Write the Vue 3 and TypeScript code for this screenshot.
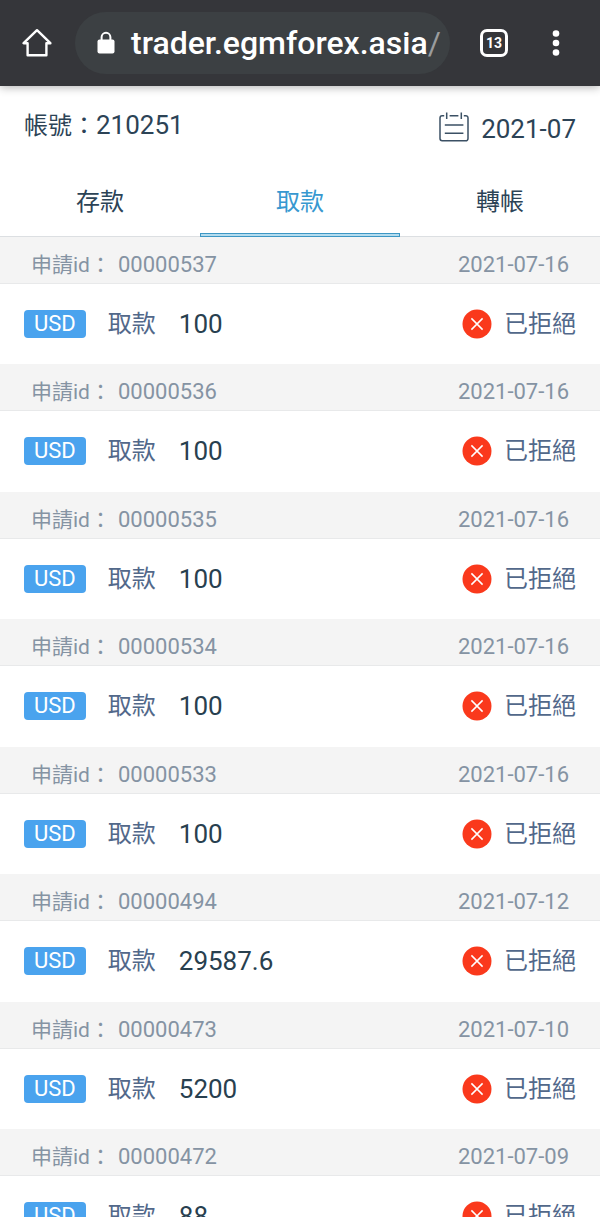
<script setup lang="ts">
import { ref } from 'vue'

interface Entry {
  id: string
  date: string
  amount: string
}

const tabs: string[] = ['存款', '取款', '轉帳']
const active = ref(1)

const entries: Entry[] = [
  { id: '00000537', date: '2021-07-16', amount: '100' },
  { id: '00000536', date: '2021-07-16', amount: '100' },
  { id: '00000535', date: '2021-07-16', amount: '100' },
  { id: '00000534', date: '2021-07-16', amount: '100' },
  { id: '00000533', date: '2021-07-16', amount: '100' },
  { id: '00000494', date: '2021-07-12', amount: '29587.6' },
  { id: '00000473', date: '2021-07-10', amount: '5200' },
  { id: '00000472', date: '2021-07-09', amount: '88' },
]
</script>

<template>
  <div class="screen">
    <header class="browser">
      <button class="icon-btn" type="button" aria-label="Home">
        <svg width="30" height="30" viewBox="0 0 30 30" fill="none" stroke="#fff" stroke-width="2.4">
          <path d="M1.6 15.2H5.6V27.2H24.4V15.2H28.4L15 2.2Z" stroke-linejoin="round" />
        </svg>
      </button>
      <a class="address" href="#">
        <svg width="18" height="24" viewBox="0 0 18 24">
          <rect x="0.5" y="8.5" width="17" height="14" rx="2" fill="#fff" />
          <path d="M4.6 9.5V6.2a4.4 4.4 0 0 1 8.8 0V9.5" fill="none" stroke="#fff" stroke-width="2" />
        </svg>
        <span class="url">trader.egmforex.asia<span class="slash">/</span></span>
      </a>
      <button class="icon-btn tab-count" type="button" aria-label="Tabs"><span>13</span></button>
      <button class="icon-btn menu" type="button" aria-label="Menu">
        <svg width="8" height="28" viewBox="0 0 8 28" fill="#fff">
          <circle cx="4" cy="4.5" r="3.3" />
          <circle cx="4" cy="14" r="3.3" />
          <circle cx="4" cy="23.5" r="3.3" />
        </svg>
      </button>
    </header>

    <main class="page">
      <section class="summary">
        <p class="account">帳號：<span class="num">210251</span></p>
        <button class="month" type="button">
          <svg width="30" height="30" viewBox="0 0 30 30" fill="none" stroke="#3b5064" stroke-width="1.5">
            <path d="M5.2 3.7H3.2A2.2 2.2 0 0 0 1 5.9V26.6a2.2 2.2 0 0 0 2.2 2.2H26.8a2.2 2.2 0 0 0 2.2-2.2V5.9a2.2 2.2 0 0 0-2.2-2.2H24.8M10.6 3.7H19.4M7.7 0.5V7M22.3 0.5V7M5.8 13H24.4M5.8 21.2H24.4" />
          </svg>
          <span class="num">2021-07</span>
        </button>
      </section>

      <nav class="tabs">
        <button
          v-for="(tab, i) in tabs"
          :key="tab"
          type="button"
          class="tab"
          :class="{ active: i === active }"
          @click="active = i"
        >{{ tab }}</button>
      </nav>

      <ul class="list">
        <li v-for="entry in entries" :key="entry.id" class="entry">
          <div class="entry-head">
            <span class="entry-label">申請id：</span>
            <span>{{ entry.id }}</span>
            <time>{{ entry.date }}</time>
          </div>
          <div class="entry-body">
            <span class="currency">USD</span>
            <span class="kind">取款</span>
            <span class="num amount">{{ entry.amount }}</span>
            <span class="status">
              <svg width="30" height="30" viewBox="0 0 30 30">
                <circle cx="15" cy="15" r="14.5" fill="#fa391c" />
                <path d="M9.4 9.4 20.6 20.6M20.6 9.4 9.4 20.6" stroke="#fff" stroke-width="1.5" />
              </svg>
              已拒絕
            </span>
          </div>
        </li>
      </ul>
    </main>
  </div>
</template>

<style>
body {
  margin: 0;
}
</style>

<style scoped>
.screen {
  display: flex;
  flex-direction: column;
  height: 100vh;
  background: #fff;
  color: #2c4356;
  font-family: Roboto, "Noto Sans CJK TC", sans-serif;
  font-size: 24px;
}

button {
  padding: 0;
  border: 0;
  background: none;
  color: inherit;
  font: inherit;
  cursor: pointer;
}

.browser {
  position: relative;
  z-index: 1;
  display: flex;
  flex: none;
  align-items: center;
  box-sizing: border-box;
  height: 86px;
  padding: 0 40px 0 22px;
  background: #35363a;
  box-shadow: 0 1px 9px rgba(0, 0, 0, 0.32);
}

.icon-btn {
  display: flex;
  flex: none;
}

.address {
  display: flex;
  flex: 1;
  align-items: center;
  min-width: 0;
  box-sizing: border-box;
  height: 62px;
  margin: 0 30px 0 23px;
  padding: 0 8px 0 22px;
  gap: 16px;
  border-radius: 31px;
  background: #3c4043;
  color: #fff;
  text-decoration: none;
}

.address svg {
  flex: none;
}

.url {
  font-size: 32px;
  font-weight: 500;
  line-height: 44px;
  white-space: nowrap;
}

.slash {
  color: #9a9c9e;
  font-weight: 400;
}

.tab-count {
  align-items: center;
  justify-content: center;
  box-sizing: border-box;
  width: 28px;
  height: 28px;
  border: 3px solid #fff;
  border-radius: 7px;
  color: #fff;
  font-size: 14px;
  font-weight: 700;
}

.menu {
  margin-left: 44px;
}

.page {
  flex: 1;
  min-height: 0;
  overflow-y: auto;
  scrollbar-width: none;
}

.summary {
  display: flex;
  align-items: flex-start;
  justify-content: space-between;
  padding: 22px 24px 20px;
}

.account {
  margin: 0;
  line-height: 34px;
}

.num {
  font-size: 26px;
}

.month {
  display: flex;
  align-items: center;
  gap: 12px;
  margin-top: 4px;
  line-height: 34px;
}

.month svg {
  margin-bottom: 4px;
}

.tabs {
  display: flex;
  border-bottom: 1px solid #dcdfe2;
}

.tab {
  position: relative;
  flex: 1;
  padding: 4px 0 2px;
  line-height: 64px;
}

.tab.active {
  color: #3798d0;
}

.tab.active::after {
  position: absolute;
  right: 0;
  bottom: -1px;
  left: 0;
  box-sizing: border-box;
  height: 4px;
  border: 1px solid #3d97c4;
  background: #b4dcee;
  content: "";
}

.list {
  margin: 0;
  padding: 0;
  list-style: none;
}

.entry-head {
  display: flex;
  align-items: baseline;
  padding: 12px 31px 2px;
  border-bottom: 1px solid #e8e9ea;
  background: #f4f4f4;
  color: #8593a3;
  font-size: 22px;
  line-height: 32px;
}

.entry-label {
  margin-right: 7px;
  font-size: 21px;
}

.entry-head time {
  margin-left: auto;
}

.entry-body {
  display: flex;
  align-items: center;
  padding: 20px 24px;
  line-height: 40px;
}

.entry:nth-child(even) .entry-body {
  padding-bottom: 21px;
}

.currency {
  padding: 0 10px;
  border-radius: 4px;
  background: #4aa3ee;
  color: #fff;
  font-size: 22px;
  line-height: 28px;
}

.kind {
  margin: 0 23px 0 22px;
  color: #52688a;
}

.amount {
  color: #28404f;
}

.status {
  display: flex;
  align-items: center;
  margin-left: auto;
  gap: 12px;
  color: #52688a;
}
</style>
